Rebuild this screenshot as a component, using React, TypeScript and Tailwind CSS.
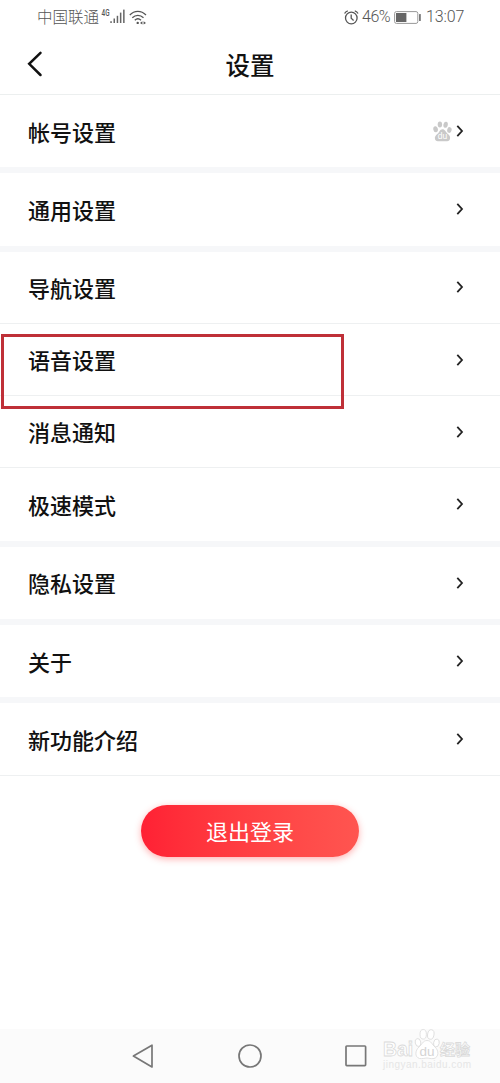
interface SettingItem {
    id: string;
    name: string;
    divider: 'line' | 'gap';
    baidu?: boolean;
}

// 设置项
const items: SettingItem[] = [
    { id: 'account', name: '帐号设置', divider: 'gap', baidu: true },
    { id: 'general', name: '通用设置', divider: 'gap' },
    { id: 'navigation', name: '导航设置', divider: 'line' },
    { id: 'voice', name: '语音设置', divider: 'line' },
    { id: 'message', name: '消息通知', divider: 'line' },
    { id: 'fast', name: '极速模式', divider: 'gap' },
    { id: 'privacy', name: '隐私设置', divider: 'gap' },
    { id: 'about', name: '关于', divider: 'gap' },
    { id: 'features', name: '新功能介绍', divider: 'line' },
];

function SignalIcon() {
    return (
        <svg width="16" height="15" viewBox="0 0 16 15" className="block">
            <g fill="#666">
                <rect x="0.3" y="12.2" width="1.5" height="1.8" />
                <rect x="3.5" y="9.5" width="1.5" height="4.5" />
                <rect x="6.7" y="6.8" width="1.5" height="7.2" />
                <rect x="9.9" y="3.6" width="1.5" height="10.4" />
                <rect x="13.1" y="0.6" width="1.5" height="13.4" />
            </g>
        </svg>
    );
}

function WifiIcon() {
    return (
        <svg width="18" height="15" viewBox="0 0 18 15" fill="none" stroke="#555" strokeWidth="1.3" className="block">
            <path d="M0.8 5C5.4 0.2 12.2 0.2 17 5" />
            <path d="M3.3 7.8C6.6 4.5 11.2 4.5 14.5 7.8" />
            <path d="M5.8 10.3C7.6 8.5 10.1 8.5 12 10.3" />
            <circle cx="8.7" cy="12.9" r="1.2" fill="#555" stroke="none" />
            <path d="M11 12.9L13.4 11.3V14.5ZM17 12.9L14.6 11.3V14.5Z" fill="#555" stroke="none" />
        </svg>
    );
}

function AlarmIcon() {
    return (
        <svg width="15" height="15" viewBox="0 0 15 15" fill="none" stroke="#555" strokeWidth="1.3" className="block">
            <circle cx="7.3" cy="8" r="5.8" />
            <path d="M7.2 4.6V8.2L9.6 10.4" />
            <path d="M0.6 3.6C1.2 2.2 2.3 1.2 3.8 0.8M14 3.6C13.4 2.2 12.3 1.2 10.8 0.8" />
        </svg>
    );
}

function BatteryIcon() {
    return (
        <svg width="28" height="13" viewBox="0 0 28 13" className="block">
            <rect x="0.6" y="0.6" width="23.2" height="11.8" rx="1.8" fill="none" stroke="#999" />
            <rect x="2" y="2" width="10.4" height="9" fill="#666" />
            <rect x="25" y="3" width="1.8" height="7" rx="0.5" fill="#777" />
        </svg>
    );
}

function PawIcon() {
    return (
        <svg width="19" height="21" viewBox="0 0 19 21" fill="#c9c9c9" className="block">
            <ellipse cx="2.6" cy="8.2" rx="2.3" ry="3" transform="rotate(-12 2.6 8.2)" />
            <ellipse cx="6.9" cy="3.6" rx="2.2" ry="3" />
            <ellipse cx="12.6" cy="3.8" rx="2.2" ry="3" transform="rotate(10 12.6 3.8)" />
            <ellipse cx="16.4" cy="9" rx="2.2" ry="2.9" transform="rotate(12 16.4 9)" />
            <path d="M9.4 8.2C12 8.2 12.6 11 14.6 12.7C17 14.5 17.6 16.4 16.8 18.4C15.6 21 12.6 20.2 9.4 20.2C6.2 20.2 3.4 21 2.1 18.4C1.3 16.2 2.4 14.4 4.6 12.7C6.4 11.2 6.8 8.2 9.4 8.2Z" />
            <text x="9.4" y="18.3" textAnchor="middle" fontSize="8.5" fill="#fff" fontFamily="Liberation Sans, sans-serif">du</text>
        </svg>
    );
}

function Chevron() {
    return (
        <svg width="8" height="12" viewBox="0 0 8 12" fill="none" stroke="#222" strokeWidth="1.8" className="block">
            <path d="M1.3 0.8L6 6L1.3 11.2" />
        </svg>
    );
}

function StatusBar() {
    return (
        <div className="flex h-[34px] shrink-0 items-center pl-[37px] pr-[34px] text-[#555]">
            <span className="-mt-[2px] w-[62px] text-[15.5px] leading-[32px] font-light whitespace-nowrap">中国联通</span>
            <svg width="11" height="14" viewBox="0 0 11 14" fill="#555" className="mb-[9px] ml-[1px] block">
                <text x="1.5" y="10" fontSize="8.5" fontWeight="500" fontFamily="Roboto, sans-serif" textLength="8" lengthAdjust="spacingAndGlyphs">4G</text>
            </svg>
            <div className="-mt-[1px] -ml-[1px]"><SignalIcon /></div>
            <div className="ml-[3px]"><WifiIcon /></div>
            <div className="ml-auto"><AlarmIcon /></div>
            <span className="ml-[3px] w-[31px] text-[16px] leading-[34px] font-light tracking-[-0.5px] font-[Roboto]">46%</span>
            <div className="ml-[1px]"><BatteryIcon /></div>
            <span className="ml-[4px] w-[40px] text-[16px] leading-[34px] font-light tracking-[-0.1px] font-[Roboto]">13:07</span>
        </div>
    );
}

function Watermark() {
    return (
        <svg width="92" height="46" viewBox="0 0 92 46" className="absolute top-[-3px] left-[382px]" fill="#fff" stroke="#dadada" strokeWidth="0.8">
            <text x="1" y="30" fontSize="20" fontWeight="700" fontFamily="Liberation Sans, sans-serif" textLength="30" lengthAdjust="spacingAndGlyphs">Bai</text>
            <ellipse cx="36" cy="16.5" rx="2.8" ry="4" transform="rotate(-12 36 16.5)" />
            <ellipse cx="41.2" cy="8.3" rx="3.2" ry="4.8" />
            <ellipse cx="48.8" cy="8.5" rx="3.2" ry="4.8" transform="rotate(10 48.8 8.5)" />
            <ellipse cx="54.4" cy="17" rx="2.8" ry="4" transform="rotate(12 54.4 17)" />
            <path d="M45 14.5C49 14.5 50 18.5 53 21C57 24.5 57 31 52 32.5C48.5 33 47 32 45 32C43 32 40.5 33 37.5 32.5C32.5 31 33 24.5 37 21C40 18.5 41 14.5 45 14.5Z" />
            <text x="45" y="29.5" fontSize="13.5" textAnchor="middle" fontFamily="Liberation Sans, sans-serif" fill="#d4d4d4" stroke="none">du</text>
            <text x="58" y="28.5" fontSize="15" fontWeight="700" fontFamily="Noto Sans CJK SC, sans-serif">经验</text>
            <text x="1" y="42" fontSize="10" fontFamily="Liberation Sans, sans-serif" fill="#e6e6e6" stroke="none" textLength="88">jingyan.baidu.com</text>
        </svg>
    );
}

export default function App() {
    return (
        <div className="flex h-[1083px] w-[500px] flex-col overflow-hidden bg-white font-['Noto_Sans_CJK_SC',sans-serif]">
            <StatusBar />

            {/* 标题栏 */}
            <div className="grid h-[61px] shrink-0 grid-cols-[1fr_auto_1fr] items-center border-b border-[#ecefef] px-[27px]">
                <svg width="16" height="26" viewBox="0 0 16 26" fill="none" stroke="#111" strokeWidth="2.5" strokeLinecap="round" className="block">
                    <path d="M13.5 1.8L2.2 12.8L13.5 24" />
                </svg>
                <h1 className="pt-[2px] text-[24.5px] leading-[58px] font-medium text-[#111]">设置</h1>
            </div>

            {/* 设置列表 */}
            <div className="shrink-0">
                {items.map((item) => (
                    <div key={item.id}>
                        <div
                            className={`relative flex h-[72.2px] items-center justify-between pl-[28px] pr-[36px] ${item.divider === 'line' ? 'border-b border-[#eef0f1]' : ''}`}
                        >
                            <span className="-mt-[1px] text-[22px] leading-[32px] font-medium text-[#111]">{item.name}</span>
                            <div className="flex items-center gap-[4px]">
                                {item.baidu && <PawIcon />}
                                <Chevron />
                            </div>
                            {item.id === 'voice' && (
                                <div className="absolute top-[10px] left-[1px] z-10 h-[75px] w-[343px] border-[3px] border-[#bf3038]" />
                            )}
                        </div>
                        {item.divider === 'gap' && <div className="h-[6.2px] bg-[#f6f7f9]" />}
                    </div>
                ))}
            </div>

            {/* 退出登录 */}
            <div className="flex justify-center pt-[29px]">
                <button className="h-[52px] w-[218px] rounded-full bg-linear-to-r from-[#ff2034] to-[#ff5550] pb-[2px] text-[22px] leading-[50px] text-white shadow-[0_2px_7px_rgba(255,60,60,0.4)]">
                    退出登录
                </button>
            </div>

            {/* 系统导航栏 */}
            <div className="relative mt-auto flex h-[54px] shrink-0 items-center justify-between bg-[#fbfbfb] pl-[131px] pr-[132px]">
                <svg width="24" height="26" viewBox="0 0 24 26" fill="none" stroke="#777" strokeWidth="1.7" strokeLinejoin="round" className="block">
                    <path d="M21 2.2V24L2.4 13.1Z" />
                </svg>
                <svg width="26" height="26" viewBox="0 0 26 26" fill="none" stroke="#777" strokeWidth="1.7" className="block">
                    <circle cx="13" cy="13" r="11" />
                </svg>
                <svg width="24" height="24" viewBox="0 0 24 24" fill="none" stroke="#777" strokeWidth="1.7" className="block">
                    <rect x="2" y="2" width="19.6" height="19.6" rx="0.8" />
                </svg>
                <Watermark />
            </div>
        </div>
    );
}
